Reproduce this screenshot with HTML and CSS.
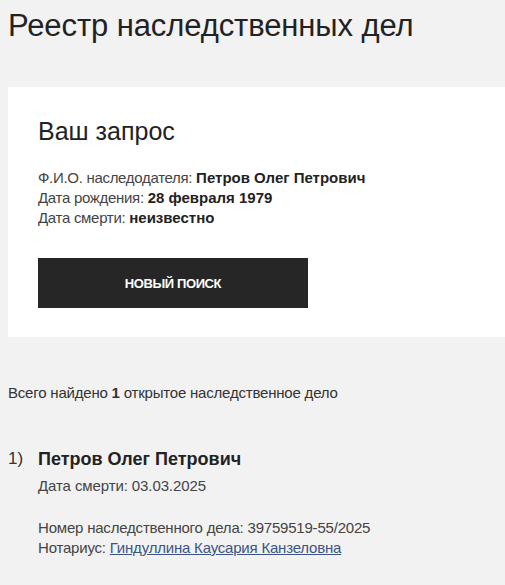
FILE: index.html
```html
<!DOCTYPE html>
<html lang="ru">
<head>
  <meta charset="UTF-8" />
  <meta name="viewport" content="width=device-width, initial-scale=1.0"/>
  <title>Реестр наследственных дел</title>
  <link rel="stylesheet" href="styles.css">
</head>
<body>
  <h1>Реестр наследственных дел</h1>

  <div class="card">
    <h2>Ваш запрос</h2>
    <p class="query">
      Ф.И.О. наследодателя: <b>Петров Олег Петрович</b><br>
      Дата рождения: <b>28 февраля 1979</b><br>
      Дата смерти: <b>неизвестно</b>
    </p>
    <button class="btn">Новый поиск</button>
  </div>

  <p class="total">Всего найдено <b>1</b> открытое наследственное дело</p>

  <ol class="cases">
    <li class="case">
      <span class="num">1)</span>
      <div class="case-body">
        <h3>Петров Олег Петрович</h3>
        <p class="death">Дата смерти: 03.03.2025</p>
        <p class="meta">
          Номер наследственного дела: 39759519-55/2025<br>
          Нотариус: <a href="#">Гиндуллина Каусария Канзеловна</a>
        </p>
      </div>
    </li>
  </ol>
</body>
</html>
```

FILE: styles.css
```css
body { font-family: "Liberation Sans", Arial, sans-serif; margin: 0; padding: 8px 0 0 8px; background: #f2f2f2; color: #222; }
h1 { font-size: 31px; font-weight: normal; line-height: 36px; margin: 0 0 43px; color: #222; letter-spacing: -0.1px; }
.card { background: #fff; padding: 30px; height: 190px; }
.card h2 { font-size: 25px; font-weight: normal; line-height: 29px; margin: 0 0 22px; }
.query { font-size: 15px; line-height: 20px; margin: 0 0 30px; color: #444; letter-spacing: -0.3px; }
.query b { color: #222; letter-spacing: 0; }
.btn { display: block; width: 270px; height: 50px; background: #262626; color: #fff; border: none; font-family: inherit; font-size: 13px; font-weight: bold; text-transform: uppercase; letter-spacing: -0.4px; cursor: pointer; }
.total { font-size: 15px; line-height: 20px; margin: 46px 0 0; color: #333; letter-spacing: -0.2px; }
.cases { list-style: none; margin: 44px 0 0; padding: 0; }
.case { display: flex; }
.num { width: 30px; font-size: 17px; line-height: 24px; color: #333; }
.case h3 { font-size: 18px; line-height: 24px; margin: 0; }
.death { font-size: 15px; line-height: 20px; margin: 5px 0 0; color: #444; letter-spacing: -0.1px; }
.meta { font-size: 15px; line-height: 20px; margin: 22px 0 0; color: #444; letter-spacing: -0.2px; }
.meta a { color: #3a5585; }
```
